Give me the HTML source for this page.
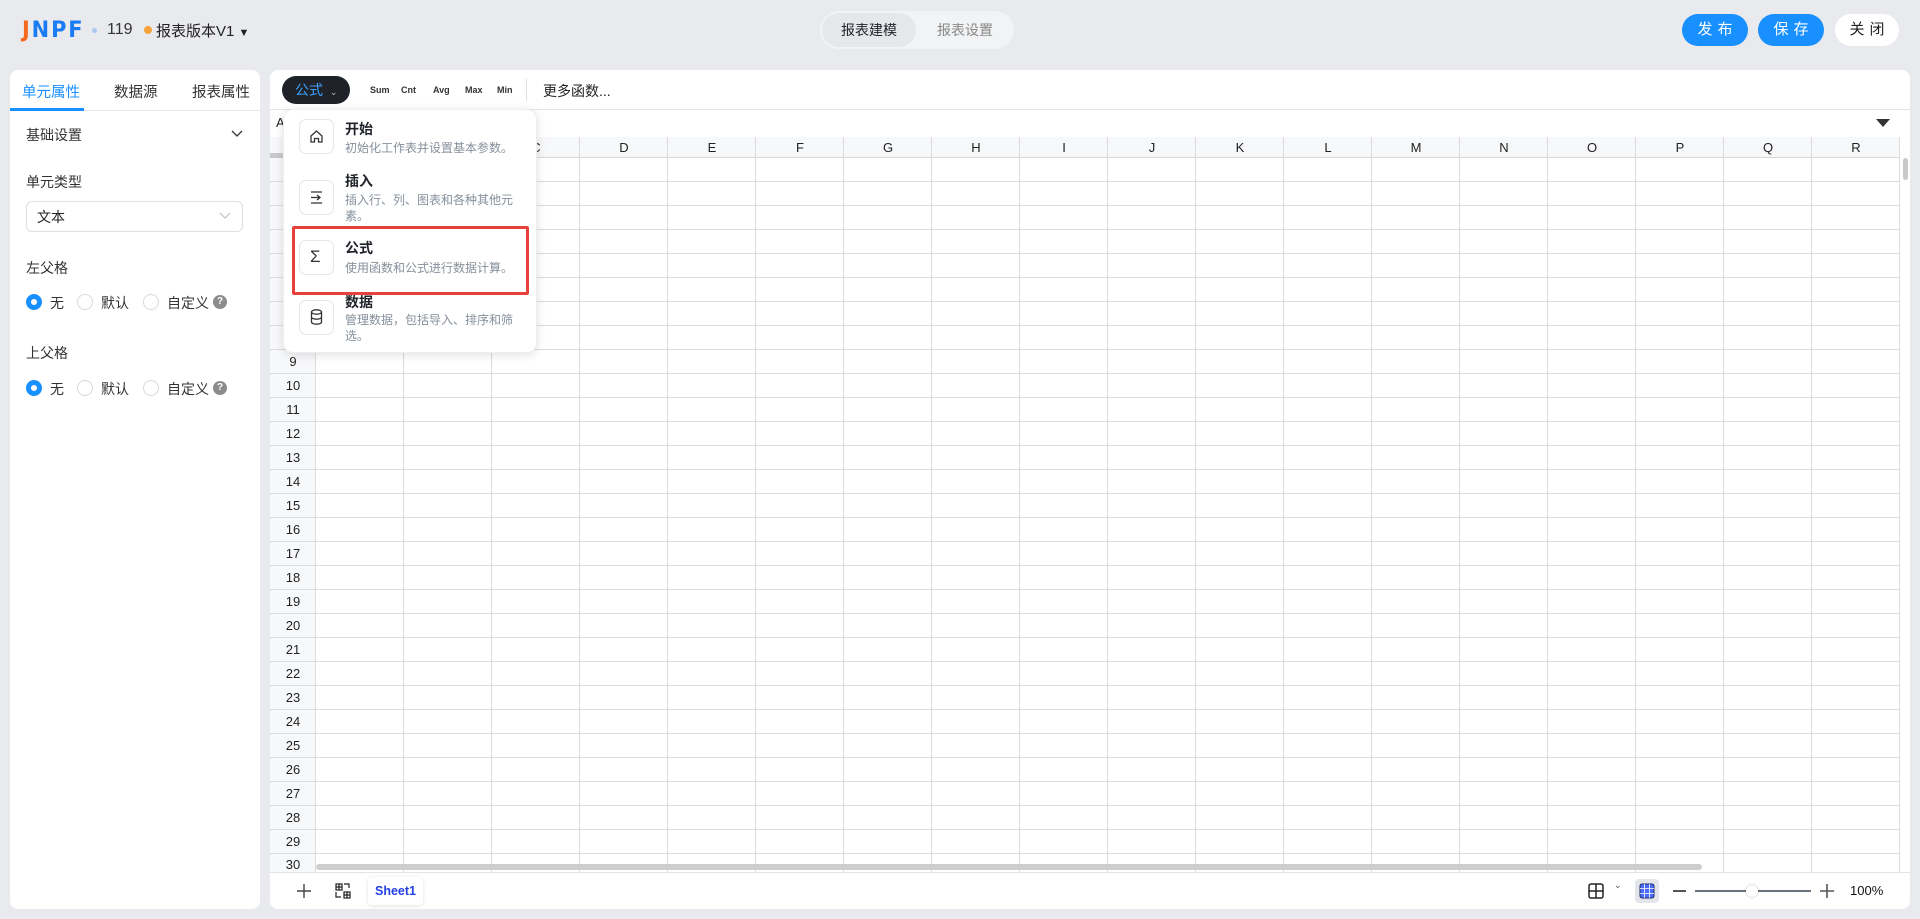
<!DOCTYPE html>
<html><head><meta charset="utf-8"><style>
*{box-sizing:border-box;margin:0;padding:0}
body{width:1920px;height:919px;background:#e9eaee;font-family:"Liberation Sans","Noto Sans CJK SC",sans-serif;position:relative;overflow:hidden;color:#1f2329}
.a{position:absolute}
.btn{position:absolute;top:14px;height:32px;border-radius:16px;font-size:15px;letter-spacing:5px;text-align:center;line-height:32px;padding-left:5px}
.panel{position:absolute;background:#fff;border-radius:8px}
.lbl{font-size:14px;color:#333}
.radio{position:absolute;width:16px;height:16px;border-radius:50%;border:1px solid #d9d9d9;background:#fff}
.radio.on{border:5px solid #1890ff}
.q{position:absolute;width:14px;height:14px;border-radius:50%;background:#8c8c8c;color:#fff;font-size:10px;text-align:center;line-height:14px;font-weight:bold}
.colh{position:absolute;top:137px;height:21px;width:88px;text-align:center;font-size:13px;line-height:21px;color:#222}
.rown{position:absolute;left:270px;width:46px;height:24px;text-align:center;font-size:13px;line-height:24px;color:#222}
.mi{position:absolute;left:299px;width:35px;height:35px;border:1px solid #e5e6eb;border-radius:7px}
.mt{position:absolute;left:345px;font-size:14px;font-weight:bold;color:#1f2329}
.md{position:absolute;left:345px;font-size:12px;color:#86909c;line-height:16px;width:180px}
.fn{position:absolute;top:85px;font-size:9px;font-weight:bold;color:#333}
</style></head><body>
<!-- header -->
<div class="a" style="left:22px;top:18px;font-size:22px;font-weight:bold;letter-spacing:2px;color:#1a7cf5;font-family:'DejaVu Sans',sans-serif;transform:scaleX(0.95);transform-origin:left">
<span style="color:#f5691e">J</span>NPF</div>
<div class="a" style="left:92px;top:28px;width:5px;height:5px;border-radius:50%;background:#a9c8f0"></div>
<div class="a" style="left:107px;top:21px;font-size:16px;color:#333">119</div>
<div class="a" style="left:144px;top:26px;width:8px;height:8px;border-radius:50%;background:#f5a33b"></div>
<div class="a" style="left:156px;top:20px;font-size:15px;color:#222">报表版本V1 <span style="font-size:11px">▼</span></div>
<div class="a" style="left:820px;top:11px;width:194px;height:38px;border-radius:19px;background:#f2f3f5"></div>
<div class="a" style="left:822px;top:13px;width:94px;height:34px;border-radius:17px;background:#e6e7ea;text-align:center;line-height:34px;font-size:14px;color:#1f2329">报表建模</div>
<div class="a" style="left:918px;top:13px;width:94px;height:34px;text-align:center;line-height:34px;font-size:14px;color:#888">报表设置</div>
<div class="btn" style="left:1682px;width:66px;background:#1890ff;color:#fff">发布</div>
<div class="btn" style="left:1758px;width:66px;background:#1890ff;color:#fff">保存</div>
<div class="btn" style="left:1835px;width:64px;background:#fff;color:#222">关闭</div>

<!-- left panel -->
<div class="panel" style="left:10px;top:70px;width:250px;height:839px"></div>
<div class="a" style="left:10px;top:110px;width:250px;height:1px;background:#e8e8e8"></div>
<div class="a" style="left:10px;top:108px;width:74px;height:3px;background:#1890ff"></div>
<div class="a" style="left:22px;top:81px;font-size:14.5px;color:#1890ff">单元属性</div>
<div class="a" style="left:114px;top:81px;font-size:14.5px;color:#333">数据源</div>
<div class="a" style="left:192px;top:81px;font-size:14.5px;color:#333">报表属性</div>
<div class="a lbl" style="left:26px;top:125px">基础设置</div>
<svg class="a" style="left:231px;top:129px" width="12" height="10"><path d="M1 2l5 5 5-5" stroke="#333" stroke-width="1.3" fill="none"/></svg>
<div class="a lbl" style="left:26px;top:172px">单元类型</div>
<div class="a" style="left:26px;top:201px;width:217px;height:31px;border:1px solid #dcdfe6;border-radius:6px"></div>
<div class="a lbl" style="left:37px;top:207px;color:#222">文本</div>
<svg class="a" style="left:219px;top:211px" width="12" height="10"><path d="M1 2l5 5 5-5" stroke="#bbb" stroke-width="1" fill="none"/></svg>
<div class="a lbl" style="left:26px;top:258px">左父格</div>
<div class="radio on" style="left:26px;top:294px"></div><div class="a lbl" style="left:50px;top:293px">无</div>
<div class="radio" style="left:77px;top:294px"></div><div class="a lbl" style="left:101px;top:293px">默认</div>
<div class="radio" style="left:143px;top:294px"></div><div class="a lbl" style="left:167px;top:293px">自定义</div>
<div class="q" style="left:213px;top:295px">?</div>
<div class="a lbl" style="left:26px;top:343px">上父格</div>
<div class="radio on" style="left:26px;top:380px"></div><div class="a lbl" style="left:50px;top:379px">无</div>
<div class="radio" style="left:77px;top:380px"></div><div class="a lbl" style="left:101px;top:379px">默认</div>
<div class="radio" style="left:143px;top:380px"></div><div class="a lbl" style="left:167px;top:379px">自定义</div>
<div class="q" style="left:213px;top:381px">?</div>

<!-- main panel -->
<div class="panel" style="left:270px;top:70px;width:1640px;height:839px;overflow:hidden"></div>
<div class="a" style="left:270px;top:109px;width:1640px;height:1px;background:#e3e4e8"></div>
<div class="a" style="left:270px;top:137px;width:1630px;height:1px;background:#e3e4e8"></div>
<div class="a" style="left:282px;top:76px;width:68px;height:28px;border-radius:14px;background:#1f2329;color:#3ea0ff;font-size:14px;line-height:28px;padding-left:13px">公式 <span style="font-size:9px;color:#bbb;margin-left:3px">⌄</span></div>
<div class="fn" style="left:370px">Sum</div><div class="fn" style="left:401px">Cnt</div><div class="fn" style="left:433px">Avg</div><div class="fn" style="left:465px">Max</div><div class="fn" style="left:497px">Min</div>
<div class="a" style="left:526px;top:79px;width:1px;height:22px;background:#e0e0e0"></div>
<div class="a" style="left:543px;top:81px;font-size:14px;color:#222">更多函数...</div>
<div class="a" style="left:276px;top:115px;font-size:13px">A</div>
<svg class="a" style="left:1876px;top:118px" width="14" height="10"><path d="M0 1h14L7 9z" fill="#333"/></svg>
<!-- grid -->
<div class="a" style="left:270px;top:137px;width:1630px;height:21px;background:#f7f8fa;border-bottom:1px solid #d8d8d8"></div>
<div class="a" style="left:270px;top:158px;width:46px;height:714px;background:#f7f8fa"></div>
<div class="a" style="left:270px;top:153px;width:46px;height:5px;background:#c8c9cc"></div>
<div class="a" style="left:316px;top:137px;width:1584px;height:735px;background-image:repeating-linear-gradient(90deg,transparent 0 87px,#dcdcdf 87px 88px)"></div>
<div class="a" style="left:315px;top:137px;width:1px;height:735px;background:#dcdcdf"></div>
<div class="a" style="left:270px;top:158px;width:1630px;height:714px;background-image:repeating-linear-gradient(180deg,transparent 0 23px,#dcdcdf 23px 24px)"></div>
<div class="colh" style="left:316px">A</div><div class="colh" style="left:404px">B</div><div class="colh" style="left:492px">C</div><div class="colh" style="left:580px">D</div><div class="colh" style="left:668px">E</div><div class="colh" style="left:756px">F</div><div class="colh" style="left:844px">G</div><div class="colh" style="left:932px">H</div><div class="colh" style="left:1020px">I</div><div class="colh" style="left:1108px">J</div><div class="colh" style="left:1196px">K</div><div class="colh" style="left:1284px">L</div><div class="colh" style="left:1372px">M</div><div class="colh" style="left:1460px">N</div><div class="colh" style="left:1548px">O</div><div class="colh" style="left:1636px">P</div><div class="colh" style="left:1724px">Q</div><div class="colh" style="left:1812px">R</div>
<div class="rown" style="top:158px">1</div><div class="rown" style="top:182px">2</div><div class="rown" style="top:206px">3</div><div class="rown" style="top:230px">4</div><div class="rown" style="top:254px">5</div><div class="rown" style="top:278px">6</div><div class="rown" style="top:302px">7</div><div class="rown" style="top:326px">8</div><div class="rown" style="top:350px">9</div><div class="rown" style="top:374px">10</div><div class="rown" style="top:398px">11</div><div class="rown" style="top:422px">12</div><div class="rown" style="top:446px">13</div><div class="rown" style="top:470px">14</div><div class="rown" style="top:494px">15</div><div class="rown" style="top:518px">16</div><div class="rown" style="top:542px">17</div><div class="rown" style="top:566px">18</div><div class="rown" style="top:590px">19</div><div class="rown" style="top:614px">20</div><div class="rown" style="top:638px">21</div><div class="rown" style="top:662px">22</div><div class="rown" style="top:686px">23</div><div class="rown" style="top:710px">24</div><div class="rown" style="top:734px">25</div><div class="rown" style="top:758px">26</div><div class="rown" style="top:782px">27</div><div class="rown" style="top:806px">28</div><div class="rown" style="top:830px">29</div><div class="rown" style="top:854px;height:18px;overflow:hidden;line-height:22px">30</div>
<div class="a" style="left:1900px;top:137px;width:10px;height:735px;background:#fff"></div>
<div class="a" style="left:1903px;top:158px;width:5px;height:22px;border-radius:3px;background:#c9c9c9"></div>
<div class="a" style="left:316px;top:864px;width:1386px;height:6px;border-radius:3px;background:#cdcdcf"></div>
<!-- footer -->
<div class="a" style="left:270px;top:872px;width:1640px;height:37px;background:#fff;border-top:1px solid #e3e4e8;border-radius:0 0 8px 8px"></div>
<svg class="a" style="left:297px;top:884px" width="14" height="14"><path d="M7 0v14M0 7h14" stroke="#444" stroke-width="1.4"/></svg>
<svg class="a" style="left:335px;top:883px" width="16" height="16" fill="none" stroke="#222" stroke-width="1.2"><rect x="1" y="1" width="6" height="6"/><path d="M4 1v6M1 4h6"/><rect x="9" y="9" width="6" height="6"/><path d="M12 9v6M9 12h6M9 1h5v4M1 9v5h5"/></svg>
<div class="a" style="left:368px;top:877px;width:55px;height:28px;border-radius:4px;background:#fff;box-shadow:0 1px 4px rgba(0,0,0,.12);text-align:center;line-height:28px;font-size:12.5px;font-weight:bold;color:#2440e8">Sheet1</div>
<svg class="a" style="left:1588px;top:883px" width="16" height="16" fill="none" stroke="#222" stroke-width="1.5"><rect x="1" y="1" width="14" height="14" rx="2"/><path d="M8 1v14M1 8h14"/></svg>
<div class="a" style="left:1614px;top:880px;font-size:9px;color:#555">⌄</div>
<div class="a" style="left:1635px;top:879px;width:24px;height:24px;border-radius:4px;background:#e3e5ea"></div>
<svg class="a" style="left:1639px;top:883px" width="16" height="16" fill="#4a6cf7" stroke="#1f2c6b" stroke-width="1"><rect x="1" y="1" width="14" height="14" rx="2"/><path d="M5.5 1v14M10.5 1v14M1 5.5h14M1 10.5h14" stroke="#fff" stroke-width="0.8"/></svg>
<div class="a" style="left:1673px;top:890px;width:13px;height:2px;background:#555"></div>
<div class="a" style="left:1695px;top:890px;width:116px;height:2px;background:#6b7280"></div>
<div class="a" style="left:1746px;top:885px;width:12px;height:12px;border-radius:50%;background:#fff;box-shadow:0 0 2px rgba(0,0,0,.3)"></div>
<svg class="a" style="left:1820px;top:884px" width="14" height="14"><path d="M7 0v14M0 7h14" stroke="#555" stroke-width="1.6"/></svg>
<div class="a" style="left:1850px;top:883px;font-size:13px;color:#111">100%</div>

<!-- dropdown -->
<div class="a" style="left:283px;top:109px;width:254px;height:244px;background:#fff;border-radius:10px;box-shadow:0 2px 10px rgba(0,0,0,.12);border:1px solid #eee"></div>
<div class="mi" style="top:119px"></div>
<svg class="a" style="left:309px;top:129px" width="15" height="15" fill="none" stroke="#333" stroke-width="1.3"><path d="M2 7L7.5 2 13 7v6h-3.5v-3.5h-4V13H2z"/></svg>
<div class="mt" style="top:119px">开始</div>
<div class="md" style="top:140px">初始化工作表并设置基本参数。</div>
<div class="mi" style="top:180px"></div>
<svg class="a" style="left:309px;top:190px" width="15" height="15" fill="none" stroke="#333" stroke-width="1.3"><path d="M2 2h11M2 13h11M2 7.5h9M8 5l3 2.5L8 10"/></svg>
<div class="mt" style="top:171px">插入</div>
<div class="md" style="top:192px">插入行、列、图表和各种其他元素。</div>
<div class="mi" style="top:240px"></div>
<div class="a" style="left:310px;top:247px;font-size:17px;color:#333">Σ</div>
<div class="mt" style="top:238px">公式</div>
<div class="md" style="top:260px">使用函数和公式进行数据计算。</div>
<div class="mi" style="top:300px"></div>
<svg class="a" style="left:310px;top:309px" width="13" height="16" fill="none" stroke="#333" stroke-width="1.3"><ellipse cx="6.5" cy="3" rx="5" ry="2.2"/><path d="M1.5 3v10c0 1.3 2.2 2.2 5 2.2s5-.9 5-2.2V3M1.5 8c0 1.3 2.2 2.2 5 2.2s5-.9 5-2.2"/></svg>
<div class="mt" style="top:292px">数据</div>
<div class="md" style="top:312px">管理数据，包括导入、排序和筛选。</div>
<div class="a" style="left:292px;top:226px;width:237px;height:69px;border:3px solid #e8413a;border-radius:2px"></div>
</body></html>
